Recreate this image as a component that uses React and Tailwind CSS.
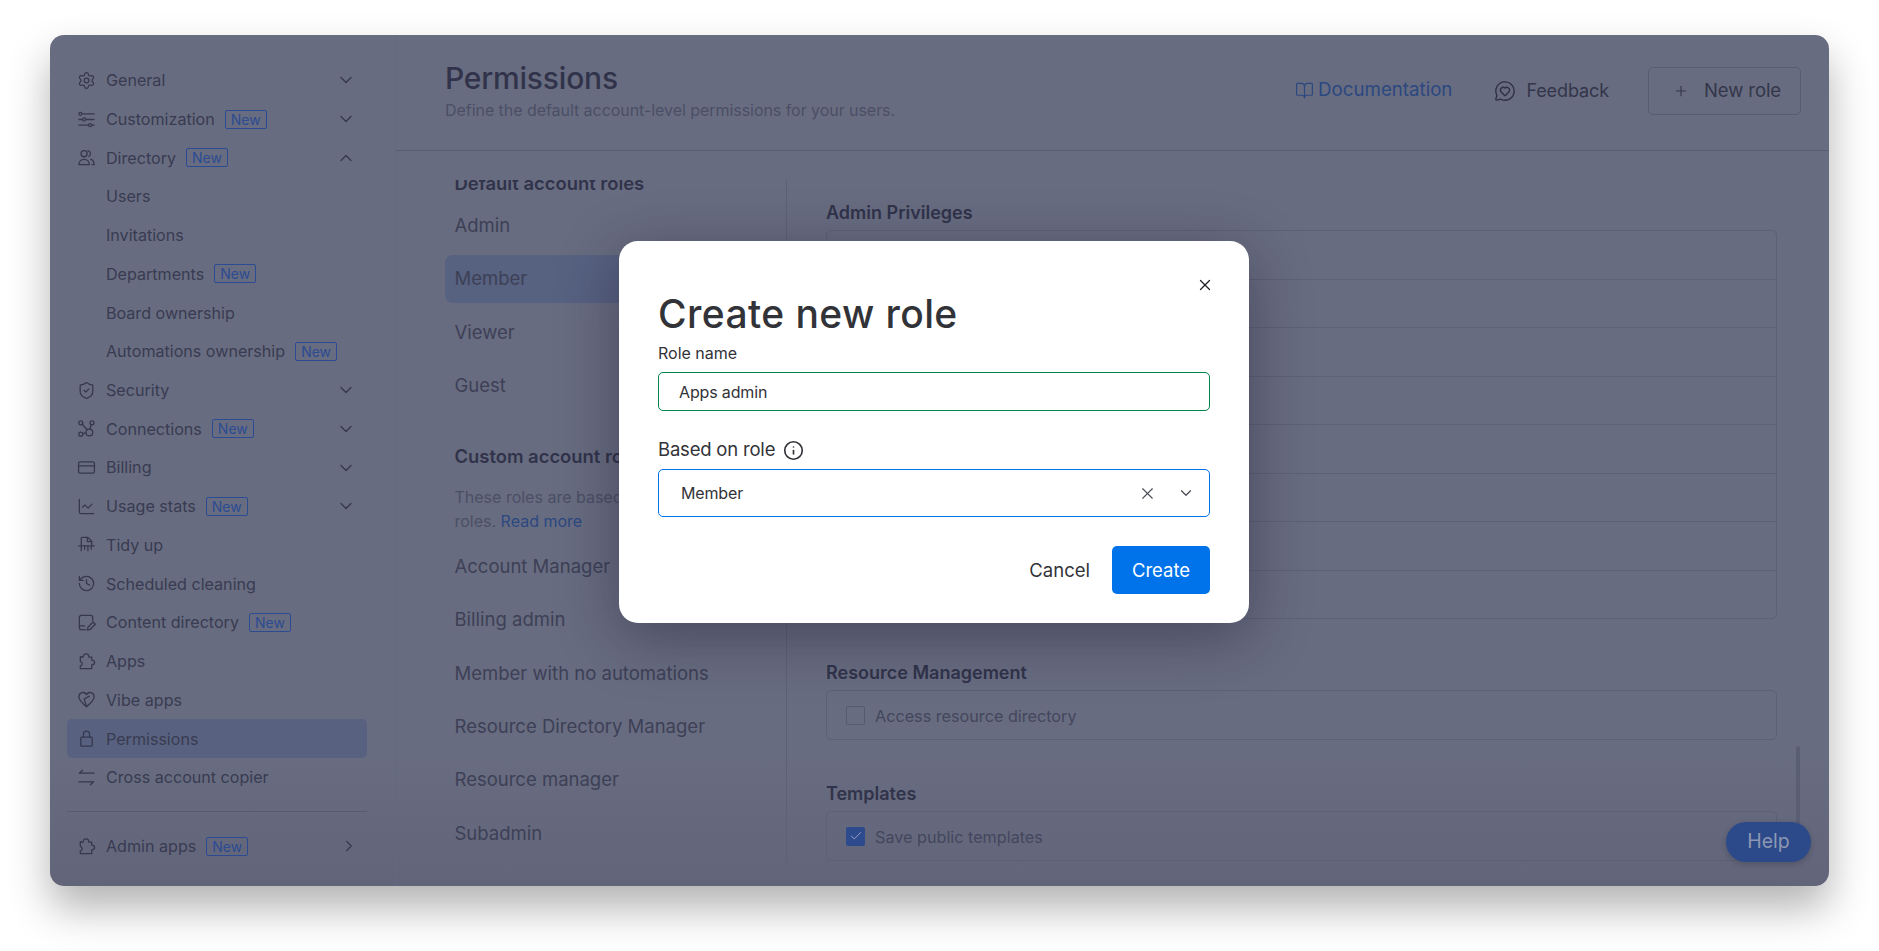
import React from 'react';
import {
    BookOpen, Check, ChartLine, ChevronDown, ChevronRight, ChevronUp, CreditCard, History, Info,
    MessageCircleHeart, Plus, Settings, ShieldCheck, X,
} from 'lucide-react';

const Glyph = ({ children }) => (
    <svg width="19" height="19" viewBox="0 0 20 20" fill="none" stroke="currentColor" strokeWidth="1.35" strokeLinecap="round" strokeLinejoin="round">
        {children}
    </svg>
);

const SlidersIcon = () => (
    <Glyph>
        <circle cx="3.6" cy="4" r="1.6" />
        <path d="M6 4h12M2 10h3.5M9.5 10H18M2 16h10M15.5 16H18" />
        <circle cx="7.5" cy="10" r="1.6" />
        <circle cx="13.8" cy="16" r="1.6" />
    </Glyph>
);

const PeopleIcon = () => (
    <Glyph>
        <circle cx="7.5" cy="6" r="3.2" />
        <path d="M2 17.5c0-3.500 2.500-5.500 5.500-5.500s5.500 2 5.500 5.500z" />
        <path d="M11.500 2.800a3.200 3.200 0 0 1 1 6M14.500 11.800c2 .8 3.500 2.800 3.500 5.700h-2" />
    </Glyph>
);

const ConnectionsIcon = () => (
    <Glyph>
        <circle cx="4" cy="4" r="2.1" />
        <circle cx="15.8" cy="4" r="2.1" />
        <circle cx="4" cy="16" r="2.1" />
        <circle cx="13" cy="14.2" r="3.6" />
        <path d="M5.5 5.5l5 5.6M15 6l-1.5 4.6M6 15.5l3.4-.8" />
    </Glyph>
);

const ShredderIcon = () => (
    <Glyph>
        <path d="M4.5 11V3.5a1 1 0 0 1 1-1h6l4 4V11M11 2.5V7h4.5M2 11.5h16M4.5 11.5v5M8 11.5v3.5M11.5 11.5v5M15 11.5v3.5" />
    </Glyph>
);

const NoteIcon = () => (
    <Glyph>
        <path d="M16.5 8V4.5a2 2 0 0 0-2-2h-10a2 2 0 0 0-2 2v11a2 2 0 0 0 2 2h4.5M3 13.5h5" />
        <path d="M11 18l.5-3 5.5-5.5 2.300 2.300-5.500 5.500z" />
    </Glyph>
);

const PuzzleIcon = () => (
    <Glyph>
        <path d="M6.500 5.500c0-2 1-3.500 3-3.500s3 1.500 3 3.500h3v3c2 0 3 .8 3 2.500s-1 2.500-3 2.500v4h-12v-3c1-.2 2-1 2-2.200s-1-2-2-2.200v-5.100z" />
    </Glyph>
);

const HeartIcon = () => (
    <Glyph>
        <path d="M10 17.500C5 13.500 2 10.500 2 7a4.300 4.300 0 0 1 8-2.200A4.300 4.300 0 0 1 18 7c0 3.500-3 6.500-8 10.500z" />
        <path d="M10 17.500 7.500 9.500 13 6.500" />
    </Glyph>
);

const LockIcon = () => (
    <Glyph>
        <rect x="4" y="8.500" width="12" height="9.500" rx="1" />
        <path d="M6.800 8.500V5.500a3.200 3.200 0 0 1 6.400 0v3" />
    </Glyph>
);

const SwapIcon = () => (
    <Glyph>
        <path d="M18 5.500H2.500M2.500 5.500 5.800 2.300M2 14.500h15.500M17.500 14.500l-3.300 3.200" />
    </Glyph>
);

const lucideProps = { size: 19, strokeWidth: 1.6 };

const navItems = [
    { label: 'General', icon: <Settings {...lucideProps} />, chevron: 'down' },
    { label: 'Customization', icon: <SlidersIcon />, badge: true, chevron: 'down' },
    { label: 'Directory', icon: <PeopleIcon />, badge: true, chevron: 'up' },
    { label: 'Users' },
    { label: 'Invitations' },
    { label: 'Departments', badge: true },
    { label: 'Board ownership' },
    { label: 'Automations ownership', badge: true },
    { label: 'Security', icon: <ShieldCheck {...lucideProps} />, chevron: 'down' },
    { label: 'Connections', icon: <ConnectionsIcon />, badge: true, chevron: 'down' },
    { label: 'Billing', icon: <CreditCard {...lucideProps} />, chevron: 'down' },
    { label: 'Usage stats', icon: <ChartLine {...lucideProps} />, badge: true, chevron: 'down' },
    { label: 'Tidy up', icon: <ShredderIcon /> },
    { label: 'Scheduled cleaning', icon: <History {...lucideProps} /> },
    { label: 'Content directory', icon: <NoteIcon />, badge: true },
    { label: 'Apps', icon: <PuzzleIcon /> },
    { label: 'Vibe apps', icon: <HeartIcon /> },
    { label: 'Permissions', icon: <LockIcon />, active: true },
    { label: 'Cross account copier', icon: <SwapIcon /> },
];

const customRoles = ['Account Manager', 'Billing admin', 'Member with no automations', 'Resource Directory Manager', 'Resource manager', 'Subadmin'];

const NewBadge = () => (
    <span className="ml-[10px] flex h-[19px] w-[42px] items-center justify-center rounded-[2px] border border-[#2b4b92] text-[14px] text-[#2b4b92]">New</span>
);

const NavRow = ({ item }) => (
    <div className={`flex h-[38.72px] items-center rounded-[5px] pl-[10px] pr-[11px] ${item.active ? 'bg-[#586280]' : ''}`}>
        <span className="flex w-[19px] justify-center text-[#35384e]">{item.icon}</span>
        <span className="ml-[10px] text-[#383b51]">{item.label}</span>
        {item.badge && <NewBadge />}
        {item.chevron === 'down' && <ChevronDown size={20} strokeWidth={1.6} className="ml-auto text-[#35384e]" />}
        {item.chevron === 'up' && <ChevronUp size={20} strokeWidth={1.6} className="ml-auto text-[#35384e]" />}
    </div>
);

const Sidebar = () => (
    <aside className="w-[346px] shrink-0 border-r border-[#64687f] pl-[17px] pr-[28px] pt-[26px] text-[16.1px]">
        {navItems.map((item) => <NavRow key={item.label} item={item} />)}
        <div className="mt-[14px] border-t border-[#585c71]" />
        <div className="mt-[15px] flex h-[38.72px] items-center pl-[10px] pr-[9px]">
            <span className="flex w-[19px] justify-center text-[#35384e]"><PuzzleIcon /></span>
            <span className="ml-[10px] text-[#383b51]">Admin apps</span>
            <NewBadge />
            <ChevronRight size={18} strokeWidth={1.6} className="ml-auto text-[#35384e]" />
        </div>
    </aside>
);

const Header = () => (
    <header className="flex h-[116px] items-center border-b border-[#595d73] pb-[6px] pl-[49px] pr-[28px]">
        <div className="flex flex-col">
            <h1 className="text-[30px] leading-[40px] font-medium tracking-[-0.2px] text-[#30334a]">Permissions</h1>
            <p className="mt-[1px] text-[16px] leading-[22px] tracking-[-0.05px] text-[#4b4f66]">Define the default account-level permissions for your users.</p>
        </div>
        <div className="ml-auto mt-[2px] flex items-center text-[18px]">
            <BookOpen size={19} strokeWidth={1.5} className="text-[#2b4880]" />
            <span className="ml-[4px] text-[18.7px] text-[#2b4880]">Documentation</span>
            <MessageCircleHeart size={22} strokeWidth={1.5} className="ml-[42px] text-[#2e3145]" />
            <span className="ml-[10px] tracking-[-0.1px] text-[#33364a]">Feedback</span>
            <div className="ml-[39px] flex h-[48px] w-[153px] items-center gap-[15px] rounded-[5px] border border-[#585c72] pl-[24px] text-[18.5px] tracking-[-0.1px] text-[#33364a]">
                <Plus size={16} strokeWidth={1.6} />
                <span>New role</span>
            </div>
        </div>
    </header>
);

const RoleColumn = () => (
    <div className="h-[682px] w-[342px] shrink-0 overflow-hidden border-r border-[#5d6177] pr-[26px] text-[18.5px] text-[#3d4056]">
        <h2 className="-mt-[9px] h-[24px] pl-[9.5px] text-[18.4px] leading-[24px] font-semibold text-[#30334a]">Default account roles</h2>
        <div className="mt-[7px] flex flex-col gap-[5.3px]">
            <div className="flex h-[48px] items-center pl-[9.5px]">Admin</div>
            <div className="flex h-[48px] items-center rounded-[8px] bg-[#576180] pl-[9.5px]">Member</div>
            <div className="flex h-[48px] items-center pl-[9.5px]">Viewer</div>
            <div className="flex h-[48px] items-center pl-[9.5px]">Guest</div>
        </div>
        <h2 className="mt-[34px] h-[24px] pl-[9.5px] text-[18.4px] leading-[24px] font-semibold text-[#30334a]">Custom account roles</h2>
        <p className="mt-[17px] pl-[9.5px] text-[16px] leading-[24px] text-[#4b4f66]">
            These roles are based on default<br />
            roles. <span className="text-[#2b4880]">Read more</span>
        </p>
        <div className="mt-[10px] flex flex-col gap-[5.3px]">
            {customRoles.map((role) => <div key={role} className="flex h-[48px] items-center pl-[9.5px]">{role}</div>)}
        </div>
    </div>
);

const PermissionCard = ({ label, checked }) => (
    <div className="mt-[6px] flex h-[50px] items-center rounded-[5px] border border-[#5d6178] pl-[19px] text-[16.2px] text-[#43465c]">
        {checked ? (
            <span className="flex h-[19px] w-[19px] items-center justify-center rounded-[2px] bg-[#2c4a8c] text-[#a2abc2]"><Check size={14} strokeWidth={1.5} /></span>
        ) : (
            <span className="h-[19px] w-[19px] rounded-[2px] border border-[#565a70]" />
        )}
        <span className="ml-[10px] mt-[2px]">{label}</span>
    </div>
);

const PrivilegeColumn = () => (
    <div className="ml-[39px] w-[951px] pt-[20px]">
        <h3 className="h-[24px] pt-[1px] text-[18px] leading-[24px] font-semibold text-[#30334a]">Admin Privileges</h3>
        <div className="mt-[6px] flex h-[389px] flex-col rounded-[5px] border border-[#5d6178]">
            {[0, 1, 2, 3, 4, 5, 6].map((n) => <div key={n} className="h-[48.5px] shrink-0 border-b border-[#5d6178]" />)}
        </div>
        <h3 className="mt-[41px] h-[24px] pt-[1px] text-[18px] leading-[24px] font-semibold text-[#30334a]">Resource Management</h3>
        <PermissionCard label="Access resource directory" />
        <h3 className="mt-[41px] h-[24px] pt-[1px] text-[18px] leading-[24px] font-semibold text-[#30334a]">Templates</h3>
        <PermissionCard label="Save public templates" checked />
    </div>
);

const CreateRoleModal = () => (
    <div className="absolute left-[619px] top-[241px] h-[382px] w-[630px] rounded-[19px] bg-white px-[39px] pt-[49px] text-[#323338] shadow-[0_14px_60px_rgba(25,25,45,0.42)]">
        <X size={18} strokeWidth={1.7} className="absolute right-[35px] top-[35px] text-[#1f2026]" />
        <h2 className="h-[48px] text-[39px] leading-[48px] font-medium tracking-[0.4px]">Create new role</h2>
        <label className="mt-[5px] block h-[20px] text-[16px] leading-[20px]">Role name</label>
        <div className="mt-[9px] flex h-[39px] items-center rounded-[5px] border-[1.3px] border-[#00854d] pl-[20px] text-[16px] tracking-[-0.15px]">Apps admin</div>
        <label className="mt-[27px] flex h-[24px] items-center text-[18.5px] tracking-[-0.2px]">
            Based on role
            <Info size={21} strokeWidth={1.9} className="ml-[8px]" />
        </label>
        <div className="mt-[7px] flex h-[48px] items-center rounded-[5px] border-[1.3px] border-[#0073ea] pl-[22px] pr-[14px] text-[16px] tracking-[-0.15px]">
            Member
            <X size={19} strokeWidth={1.4} className="ml-auto text-[#4a4c56]" />
            <ChevronDown size={18} strokeWidth={1.6} className="ml-[20px] text-[#4a4c56]" />
        </div>
        <div className="mt-[29px] flex items-center justify-end text-[18.5px]">
            <span className="mt-[2px]">Cancel</span>
            <button className="ml-[22px] h-[48px] w-[98px] rounded-[5px] bg-[#0073ea] pt-[2px] text-white">Create</button>
        </div>
    </div>
);

export default function App() {
    return (
        <div className="relative h-[951px] w-full overflow-hidden bg-white font-['Inter',sans-serif]">
            <div className="absolute left-[50px] top-[35px] flex h-[851px] w-[1779px] overflow-hidden rounded-[14px] bg-gradient-to-b from-[#686c80] from-85% to-[#62657a] shadow-[0_22px_42px_rgba(0,0,0,0.3)]">
                <Sidebar />
                <main className="flex min-w-0 flex-1 flex-col">
                    <Header />
                    <div className="flex pl-[49px] pt-[29px]">
                        <RoleColumn />
                        <PrivilegeColumn />
                    </div>
                </main>
                <div className="absolute right-[29px] top-[711px] h-[85px] w-[4px] rounded-full bg-[#5a5e75]" />
                <div className="absolute right-[18px] top-[787px] flex h-[40px] w-[85px] items-center justify-center rounded-[20px] bg-[#2c4a8a] text-[19.5px] text-[#8d97b2] shadow-[0_2px_6px_rgba(0,0,0,0.2)]">Help</div>
            </div>
            <CreateRoleModal />
        </div>
    );
}
